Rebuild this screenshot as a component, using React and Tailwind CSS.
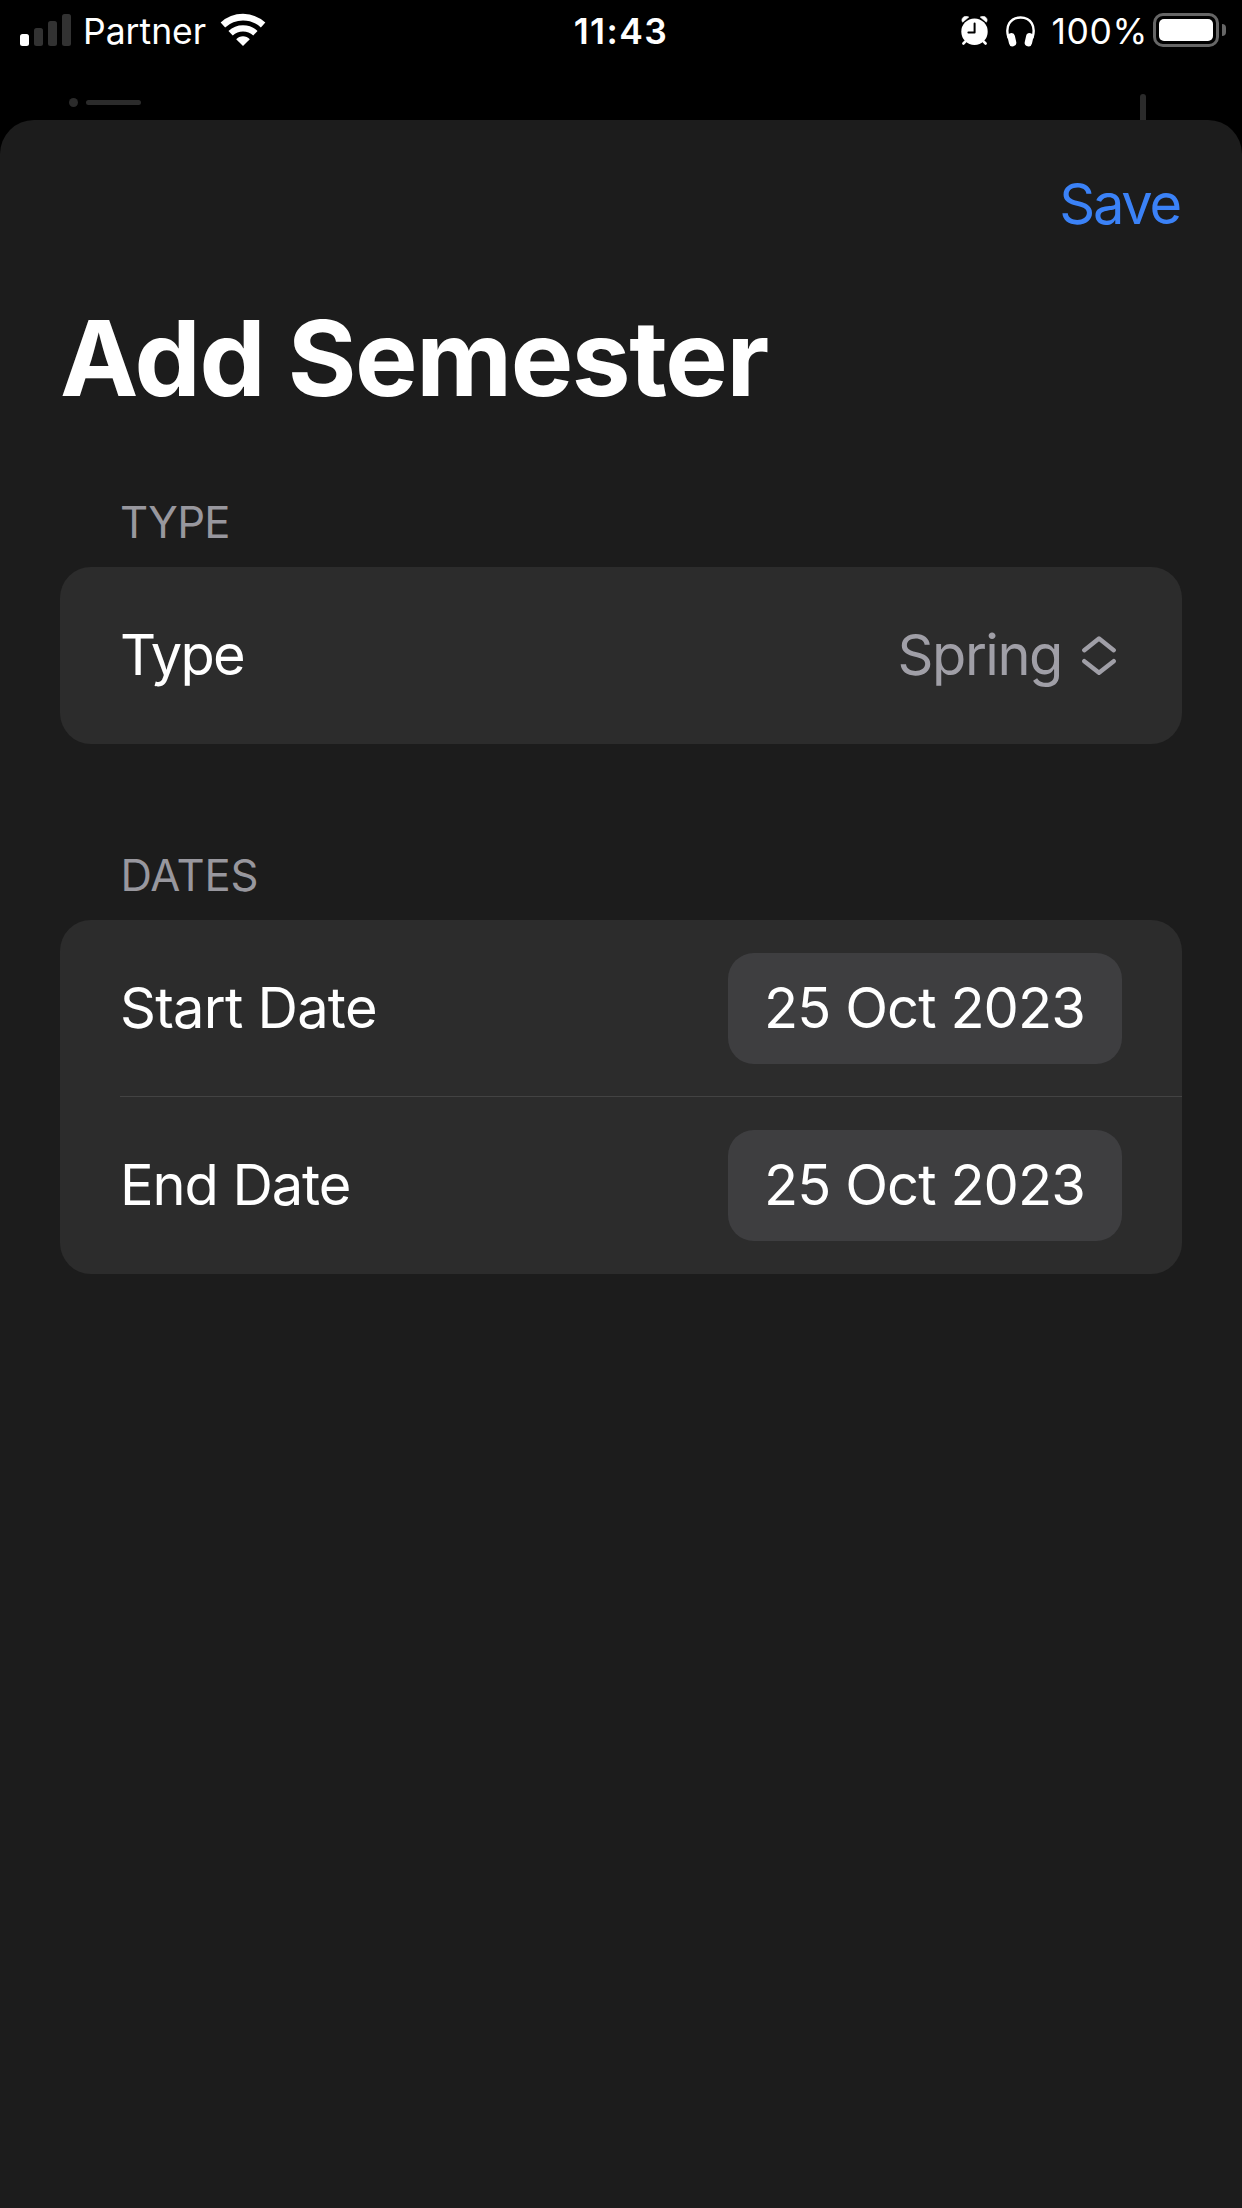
function SignalBars() {
  return (
    <div className="flex items-end gap-[5px]">
      <div className="h-[12px] w-[9px] rounded-[2.5px] bg-white" />
      <div className="h-[18px] w-[9px] rounded-[2.5px] bg-[#323232]" />
      <div className="h-[25px] w-[9px] rounded-[2.5px] bg-[#323232]" />
      <div className="h-[32px] w-[9px] rounded-[2.5px] bg-[#323232]" />
    </div>
  );
}

function WifiIcon() {
  return (
    <svg className="h-[34px] w-[46px]" viewBox="0 0 46 34" fill="none">
      <path d="M2.9 12A29.6 29.6 0 0 1 43.1 12" stroke="white" strokeWidth="6.6" />
      <path d="M10.6 20.2A18.2 18.2 0 0 1 35.4 20.2" stroke="white" strokeWidth="6.3" />
      <path d="M23 33L16.2 26.2C19.6 22.3 26.4 22.3 29.8 26.2Z" fill="white" />
    </svg>
  );
}

function AlarmIcon() {
  return (
    <svg className="h-[30px] w-[28px]" viewBox="0 0 28 30" fill="none">
      <path d="M5 24.8L2.4 27.5M22 24.8L24.6 27.5" stroke="white" strokeWidth="2.6" strokeLinecap="round" />
      <path d="M1.6 6.2C-1 2.6 4 -1.8 7.8 1.1Z" fill="white" stroke="white" strokeWidth="0.6" />
      <path d="M25.4 6.2C28 2.6 23 -1.8 19.2 1.1Z" fill="white" stroke="white" strokeWidth="0.6" />
      <circle cx="13.5" cy="15.7" r="13.2" fill="white" />
      <path d="M13.6 7.6V16.4H7.4" stroke="black" strokeWidth="2" strokeLinecap="round" strokeLinejoin="round" />
    </svg>
  );
}

function HeadphonesIcon() {
  return (
    <svg className="h-[31px] w-[29px]" viewBox="0 0 29 31" fill="none">
      <path d="M2.6 22C-1.2 10.5 4 1.5 14.5 1.5S30.2 10.5 26.4 22" stroke="white" strokeWidth="2.4" />
      <rect x="2.3" y="17" width="7.4" height="13.4" rx="3.6" transform="rotate(-13 6 24)" fill="white" />
      <rect x="19.3" y="17" width="7.4" height="13.4" rx="3.6" transform="rotate(13 23 24)" fill="white" />
    </svg>
  );
}

function Battery() {
  return (
    <div className="flex items-center gap-[3px]">
      <div className="h-[34px] w-[66px] rounded-[10px] border-[3px] border-[#666666] p-[3px]">
        <div className="h-full w-full rounded-[5px] bg-white" />
      </div>
      <div className="h-[12px] w-[4px] rounded-r-full bg-[#666666]" />
    </div>
  );
}

function StatusBar() {
  return (
    <header className="grid h-[60px] grid-cols-[1fr_auto_1fr] items-start text-[35.5px] leading-[36px]">
      <div className="flex items-start pl-[20px]">
        <div className="pt-[14px]"><SignalBars /></div>
        <span className="ml-[12px] mt-[14px]">Partner</span>
        <div className="ml-[14px] mt-[13px]"><WifiIcon /></div>
      </div>
      <span className="mt-[14px] font-semibold tracking-[1.4px]">11:43</span>
      <div className="flex items-start justify-end pr-[16px]">
        <div className="mt-[16px]"><AlarmIcon /></div>
        <div className="ml-[17px] mt-[16px]"><HeadphonesIcon /></div>
        <span className="ml-[17px] mt-[14px] tracking-[0.6px]">100%</span>
        <div className="ml-[5px] mt-[13px]"><Battery /></div>
      </div>
    </header>
  );
}

function BackgroundPeek() {
  return (
    <div className="flex h-[60px] items-start justify-between pl-[69px] pr-[96px]">
      <div className="flex items-center gap-[8px] pt-[38px]">
        <div className="h-[9px] w-[9px] rounded-full bg-[#2b2b2b]" />
        <div className="h-[5px] w-[55px] rounded-full bg-[#2b2b2b]" />
      </div>
      <div className="mt-[34px] h-[26px] w-[6px] rounded-t-full bg-[#2b2b2b]" />
    </div>
  );
}

function UpDownChevrons() {
  return (
    <svg className="h-[40px] w-[34px]" viewBox="0 0 34 40" fill="none" stroke="#a09fa7" strokeWidth="4.4" strokeLinecap="round" strokeLinejoin="round">
      <path d="M2.3 14.2L17 2.6L31.7 14.2" />
      <path d="M2.3 25.2L17 36.8L31.7 25.2" />
    </svg>
  );
}

function DateRow({ label, value, labelClass }) {
  return (
    <div className="flex h-[177px] items-center justify-between pl-[60px] pr-[60px]">
      <span className={labelClass}>{label}</span>
      <button className="flex h-[111px] w-[394px] items-center justify-center rounded-[26px] bg-[#3e3e40] pb-[2px] pr-px tracking-[-0.93px]">
        {value}
      </button>
    </div>
  );
}

export default function App() {
  return (
    <div className="flex h-[2208px] w-[1242px] flex-col overflow-hidden bg-black font-['Inter','Liberation_Sans',sans-serif] text-white">
      <StatusBar />
      <BackgroundPeek />
      <main className="flex-1 rounded-t-[34px] bg-[#1c1c1c] px-[60px] text-[56px] leading-[60px]">
        <div className="flex justify-end pr-[2px] pt-[54px]">
          <button className="tracking-[-2.2px] text-[#3b82f7]">Save</button>
        </div>
        <h1 className="mt-[64px] text-[105px] font-bold leading-[120px] tracking-[-1.38px]">Add Semester</h1>
        <section className="mt-[80px]">
          <h2 className="pl-[60px] text-[43.6px] leading-[50px] tracking-[-0.7px] text-[#98979e]">TYPE</h2>
          <div className="mt-[19px] flex h-[177px] items-center justify-between rounded-[31px] bg-[#2c2c2c] pl-[60px] pr-[66px]">
            <span className="pb-[2px] tracking-[-1.8px]">Type</span>
            <div className="flex items-center gap-[20px] text-[#a09fa7]">
              <span className="pb-[2px] tracking-[-1.46px]">Spring</span>
              <UpDownChevrons />
            </div>
          </div>
        </section>
        <section className="mt-[107px]">
          <h2 className="pl-[60.5px] text-[43.6px] leading-[50px] tracking-[-0.2px] text-[#98979e]">DATES</h2>
          <div className="mt-[19px] rounded-[31px] bg-[#2c2c2c]">
            <DateRow label="Start Date" value="25 Oct 2023" labelClass="pb-[2px] tracking-[-0.75px]" />
            <div className="-mt-px ml-[60px] h-px bg-[#434343]" />
            <DateRow label="End Date" value="25 Oct 2023" labelClass="pb-[2px] tracking-[-1.1px]" />
          </div>
        </section>
      </main>
    </div>
  );
}
